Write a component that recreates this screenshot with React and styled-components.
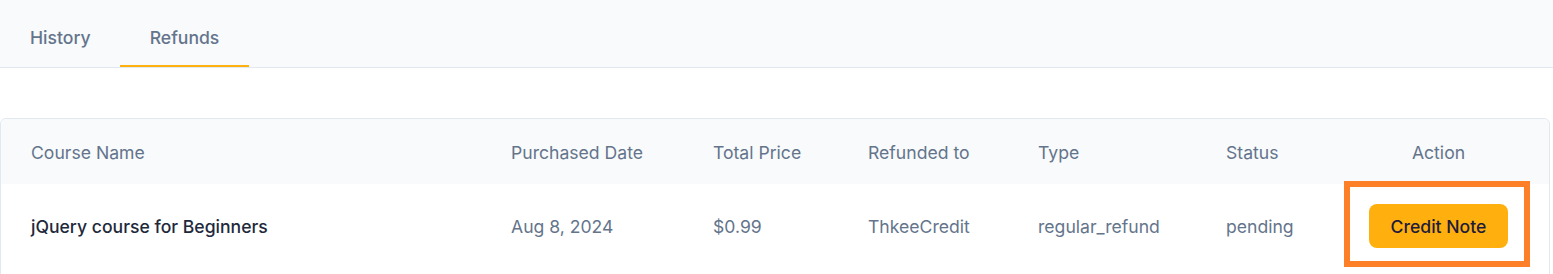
import React from "react";
import styled, { createGlobalStyle } from "styled-components";

const Global = createGlobalStyle`
  html, body { margin: 0; padding: 0; background: #ffffff; }
  body { font-family: Inter, "Noto Sans", sans-serif; -webkit-font-smoothing: antialiased; }
  * { box-sizing: border-box; }
`;

const Page = styled.div`
  width: 1553px;
  display: flex;
  flex-direction: column;
`;

const TabBar = styled.div`
  display: flex;
  height: 68px;
  background: #f8fafc;
  border-bottom: 1px solid #e2e8f0;
`;

const Tab = styled.button`
  height: 67px;
  padding: 28px 30px 0;
  margin-right: ${(p) => (p.$active ? "0" : "-1px")};
  border: none;
  border-bottom: 2px solid ${(p) => (p.$active ? "#ffb20f" : "transparent")};
  background: transparent;
  font-family: inherit;
  font-size: 17.6px;
  line-height: 20px;
  font-weight: 500;
  color: #64748b;
  display: flex;
  align-items: flex-start;
  cursor: pointer;
`;

const Table = styled.div`
  margin-top: 50px;
  width: 1550px;
  border: 1px solid #e2e8f0;
  border-radius: 6px;
`;

const Row = styled.div`
  display: grid;
  grid-template-columns: 480px 202px 155px 170px 188px 132px 1fr;
  align-items: center;
  background: ${(p) => (p.$head ? "#f8fafc" : "#ffffff")};
  height: ${(p) => (p.$head ? "65px" : "auto")};
  padding: ${(p) => (p.$head ? "0" : "20px 0 30px")};
  grid-auto-rows: ${(p) => (p.$head ? "auto" : "44px")};
  border-radius: ${(p) => (p.$head ? "6px 6px 0 0" : "0")};
`;

const Cell = styled.div`
  padding-left: 30px;
  font-size: 17.6px;
  line-height: 22px;
  font-weight: ${(p) => (p.$strong ? 500 : 400)};
  color: ${(p) => (p.$strong ? "#1e293b" : "#64748b")};
  padding-right: ${(p) => (p.$center ? "30px" : "0")};
  display: ${(p) => (p.$center ? "flex" : "block")};
  justify-content: center;
  padding-top: ${(p) => (p.$center && !p.$head ? "0" : "2px")};
`;

const Highlight = styled.span`
  position: relative;
  display: inline-flex;
  &::after {
    content: "";
    position: absolute;
    top: -23px;
    bottom: -19px;
    left: -25px;
    right: -22px;
    border: 6px solid #fd7f28;
    pointer-events: none;
  }
`;

const ActionButton = styled.button`
  width: 139px;
  height: 44px;
  border: none;
  border-radius: 8px;
  background: #ffb00f;
  color: #1e1b3a;
  font-family: inherit;
  font-size: 17.6px;
  font-weight: 500;
  cursor: pointer;
`;

const headers = [
  "Course Name",
  "Purchased Date",
  "Total Price",
  "Refunded to",
  "Type",
  "Status",
];

export default function App() {
  return (
    <Page>
      <Global />
      <TabBar>
        <Tab>History</Tab>
        <Tab $active>Refunds</Tab>
      </TabBar>
      <Table>
        <Row $head>
          {headers.map((h) => (
            <Cell key={h} $head>{h}</Cell>
          ))}
          <Cell $head $center>Action</Cell>
        </Row>
        <Row>
          <Cell $strong>jQuery course for Beginners</Cell>
          <Cell>Aug 8, 2024</Cell>
          <Cell>$0.99</Cell>
          <Cell>ThkeeCredit</Cell>
          <Cell>regular_refund</Cell>
          <Cell>pending</Cell>
          <Cell $center>
            <Highlight>
              <ActionButton>Credit Note</ActionButton>
            </Highlight>
          </Cell>
        </Row>
      </Table>
    </Page>
  );
}
